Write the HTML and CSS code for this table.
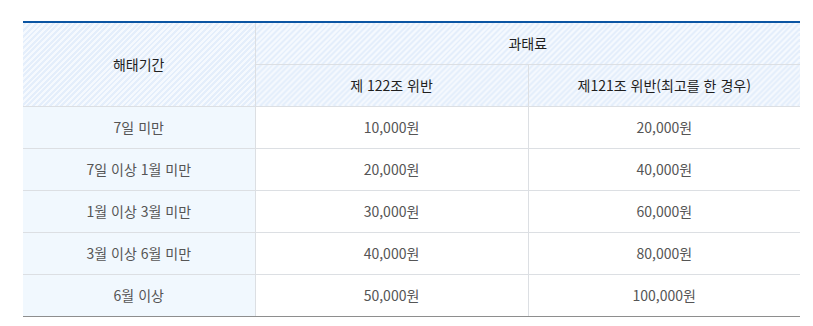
FILE: index.html
```html
<!DOCTYPE html>
<html lang="ko">
<head>
<meta charset="utf-8">
<link rel="stylesheet" href="styles.css">
</head>
<body>
<div class="wrap">
<table class="fee">
  <colgroup>
    <col class="c1"><col class="c2"><col class="c3">
  </colgroup>
  <thead>
    <tr class="h1">
      <th rowspan="2" class="hatch">해태기간</th>
      <th colspan="2" class="hatch">과태료</th>
    </tr>
    <tr class="h2">
      <th class="hatch">제 122조 위반</th>
      <th class="hatch">제121조 위반(최고를 한 경우)</th>
    </tr>
  </thead>
  <tbody>
    <tr><td class="period">7일 미만</td><td>10,000원</td><td>20,000원</td></tr>
    <tr><td class="period">7일 이상 1월 미만</td><td>20,000원</td><td>40,000원</td></tr>
    <tr><td class="period">1월 이상 3월 미만</td><td>30,000원</td><td>60,000원</td></tr>
    <tr><td class="period">3월 이상 6월 미만</td><td>40,000원</td><td>80,000원</td></tr>
    <tr><td class="period">6월 이상</td><td>50,000원</td><td>100,000원</td></tr>
  </tbody>
</table>
</div>
</body>
</html>
```
FILE: styles.css
```css
html, body {
  margin: 0;
  padding: 0;
  background: #fff;
}
.wrap {
  padding: 21px 0 0 23px;
}
.fee {
  width: 777px;
  border-collapse: collapse;
  table-layout: fixed;
  font-family: "Noto Sans CJK KR", "Noto Sans", sans-serif;
  font-size: 14px;
  border-top: 2px solid #0b55a3;
  border-bottom: 1px solid #8e8e8e;
}
.c1 { width: 232px; }
.c2 { width: 273px; }
.c3 { width: 272px; }
.fee th, .fee td {
  text-align: center;
  vertical-align: middle;
  padding: 0;
  border: 1px solid #dcdfe3;
  line-height: 20px;
}
.fee tr > :first-child { border-left: none; }
.fee tr > :last-child { border-right: none; }
.fee tr.h2 > :first-child { border-left: 1px solid #dcdfe3; }
.fee th {
  font-weight: normal;
  color: #1f1f1f;
}
.hatch {
  background-color: #e9f2fc;
  background-image: repeating-linear-gradient(
    -45deg,
    #e4eefb 0px,
    #e4eefb 2px,
    #f5f9fe 2px,
    #f5f9fe 4px
  );
}
.h1 { height: 42px; }
.h2 { height: 42px; }
.fee tbody tr { height: 42px; }
.fee td {
  color: #555;
  background: #fff;
}
.fee td.period {
  background: #f1f8fe;
}
.fee tbody tr:last-child td { border-bottom: 1px solid #8e8e8e; }
```
